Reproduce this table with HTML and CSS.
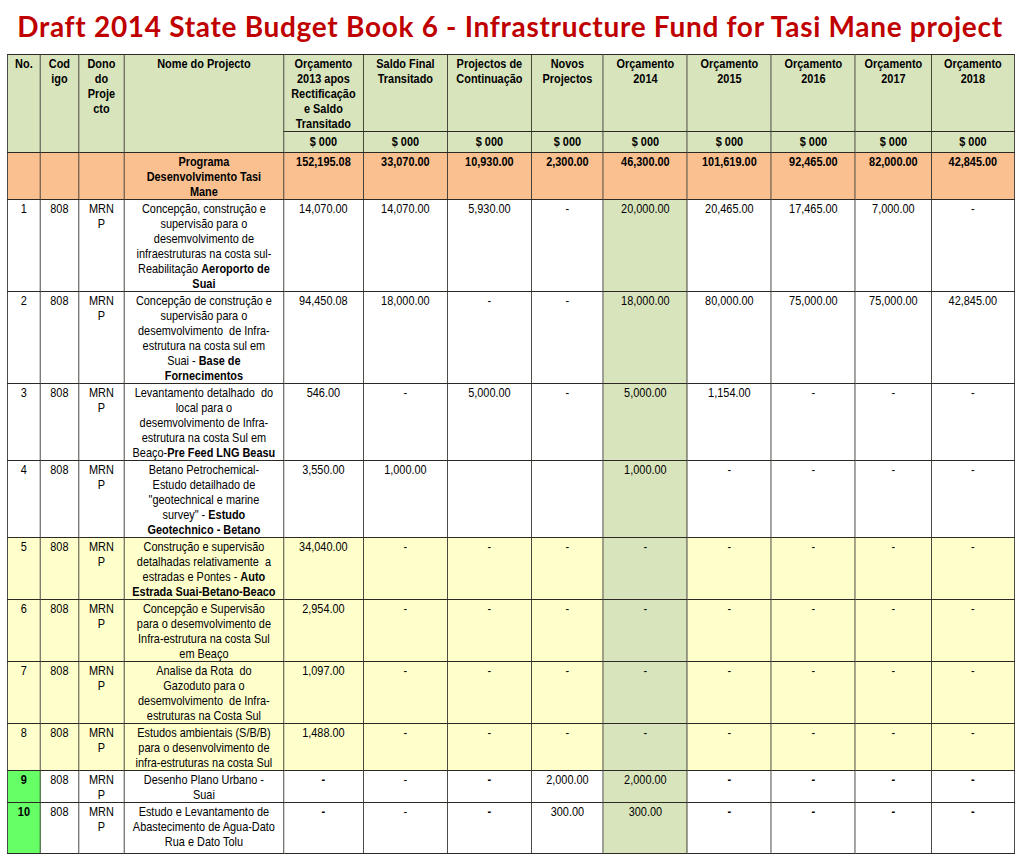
FILE: index.html
```html
<!DOCTYPE html>
<html lang="pt">
<head>
<meta charset="utf-8">
<title>Draft 2014 State Budget Book 6</title>
<link rel="stylesheet" href="styles.css">
</head>
<body>
<h1 class="title">Draft 2014 State Budget Book 6 - Infrastructure Fund for Tasi Mane project</h1>
<div class="wrap">
<table class="budget">
  <colgroup>
    <col class="c-no"><col class="c-cod"><col class="c-dono"><col class="c-nome">
    <col class="c-o13"><col class="c-saldo"><col class="c-cont"><col class="c-novos">
    <col class="c-o14"><col class="c-o15"><col class="c-o16"><col class="c-o17"><col class="c-o18">
  </colgroup>
  <thead>
    <tr class="h1">
      <th rowspan="2">No.</th>
      <th rowspan="2">Cod<br>igo</th>
      <th rowspan="2">Dono<br>do<br>Proje<br>cto</th>
      <th rowspan="2">Nome do Projecto</th>
      <th>Orçamento<br>2013 apos<br>Rectificação<br>e Saldo<br>Transitado</th>
      <th>Saldo Final<br>Transitado</th>
      <th>Projectos de<br>Continuação</th>
      <th>Novos<br>Projectos</th>
      <th>Orçamento<br>2014</th>
      <th>Orçamento<br>2015</th>
      <th>Orçamento<br>2016</th>
      <th>Orçamento<br>2017</th>
      <th>Orçamento<br>2018</th>
    </tr>
    <tr class="h2">
      <th>$ 000</th><th>$ 000</th><th>$ 000</th><th>$ 000</th><th>$ 000</th>
      <th>$ 000</th><th>$ 000</th><th>$ 000</th><th>$ 000</th>
    </tr>
  </thead>
  <tbody>
    <tr class="prog">
      <td></td><td></td><td></td>
      <td>Programa<br>Desenvolvimento Tasi<br>Mane</td>
      <td>152,195.08</td><td>33,070.00</td><td>10,930.00</td><td>2,300.00</td>
      <td>46,300.00</td><td>101,619.00</td><td>92,465.00</td><td>82,000.00</td><td>42,845.00</td>
    </tr>
    <tr>
      <td>1</td><td>808</td><td>MRN<br>P</td>
      <td class="name">Concepção, construção e<br>supervisão para o<br>desemvolvimento de<br>infraestruturas na costa sul-<br>Reabilitação <b>Aeroporto de</b><br><b>Suai</b></td>
      <td>14,070.00</td><td>14,070.00</td><td>5,930.00</td><td>-</td>
      <td class="hl">20,000.00</td><td>20,465.00</td><td>17,465.00</td><td>7,000.00</td><td>-</td>
    </tr>
    <tr>
      <td>2</td><td>808</td><td>MRN<br>P</td>
      <td class="name">Concepção de construção e<br>supervisão para o<br>desemvolvimento&nbsp; de Infra-<br>estrutura na costa sul em<br>Suai - <b>Base de</b><br><b>Fornecimentos</b></td>
      <td>94,450.08</td><td>18,000.00</td><td>-</td><td>-</td>
      <td class="hl">18,000.00</td><td>80,000.00</td><td>75,000.00</td><td>75,000.00</td><td>42,845.00</td>
    </tr>
    <tr>
      <td>3</td><td>808</td><td>MRN<br>P</td>
      <td class="name">Levantamento detalhado&nbsp; do<br>local para o<br>desemvolvimento de Infra-<br>estrutura na costa Sul em<br>Beaço-<b>Pre Feed LNG Beasu</b></td>
      <td>546.00</td><td>-</td><td>5,000.00</td><td>-</td>
      <td class="hl">5,000.00</td><td>1,154.00</td><td>-</td><td>-</td><td>-</td>
    </tr>
    <tr>
      <td>4</td><td>808</td><td>MRN<br>P</td>
      <td class="name">Betano Petrochemical-<br>Estudo detailhado de<br>"geotechnical e marine<br>survey" - <b>Estudo</b><br><b>Geotechnico - Betano</b></td>
      <td>3,550.00</td><td>1,000.00</td><td></td><td></td>
      <td class="hl">1,000.00</td><td>-</td><td>-</td><td>-</td><td>-</td>
    </tr>
    <tr class="yel">
      <td>5</td><td>808</td><td>MRN<br>P</td>
      <td class="name">Construção e supervisão<br>detalhadas relativamente&nbsp; a<br>estradas e Pontes - <b>Auto</b><br><b>Estrada Suai-Betano-Beaco</b></td>
      <td>34,040.00</td><td>-</td><td>-</td><td>-</td>
      <td class="hl">-</td><td>-</td><td>-</td><td>-</td><td>-</td>
    </tr>
    <tr class="yel">
      <td>6</td><td>808</td><td>MRN<br>P</td>
      <td class="name">Concepção e Supervisão<br>para o desemvolvimento de<br>Infra-estrutura na costa Sul<br>em Beaço</td>
      <td>2,954.00</td><td>-</td><td>-</td><td>-</td>
      <td class="hl">-</td><td>-</td><td>-</td><td>-</td><td>-</td>
    </tr>
    <tr class="yel">
      <td>7</td><td>808</td><td>MRN<br>P</td>
      <td class="name">Analise da Rota&nbsp; do<br>Gazoduto para o<br>desemvolvimento&nbsp; de Infra-<br>estruturas na Costa Sul</td>
      <td>1,097.00</td><td>-</td><td>-</td><td>-</td>
      <td class="hl">-</td><td>-</td><td>-</td><td>-</td><td>-</td>
    </tr>
    <tr class="yel">
      <td>8</td><td>808</td><td>MRN<br>P</td>
      <td class="name">Estudos ambientais (S/B/B)<br>para o desenvolvimento de<br>infra-estruturas na costa Sul</td>
      <td>1,488.00</td><td>-</td><td>-</td><td>-</td>
      <td class="hl">-</td><td>-</td><td>-</td><td>-</td><td>-</td>
    </tr>
    <tr class="r9">
      <td class="new">9</td><td>808</td><td>MRN<br>P</td>
      <td class="name">Desenho Plano Urbano -<br>Suai</td>
      <td class="b">-</td><td>-</td><td class="b">-</td><td>2,000.00</td>
      <td class="hl">2,000.00</td><td class="b">-</td><td class="b">-</td><td class="b">-</td><td class="b">-</td>
    </tr>
    <tr class="r10">
      <td class="new">10</td><td>808</td><td>MRN<br>P</td>
      <td class="name">Estudo e Levantamento de<br>Abastecimento de Agua-Dato<br>Rua e Dato Tolu</td>
      <td class="b">-</td><td>-</td><td class="b">-</td><td>300.00</td>
      <td class="hl">300.00</td><td class="b">-</td><td class="b">-</td><td class="b">-</td><td class="b">-</td>
    </tr>
  </tbody>
</table>
</div>
</body>
</html>
```
FILE: styles.css
```css
html, body {
  margin: 0;
  padding: 0;
  background: #ffffff;
}

.title {
  margin: 0;
  padding: 9px 0 0 0;
  height: 46px;
  box-sizing: border-box;
  text-align: center;
  font-family: Lato, "Open Sans", sans-serif;
  font-weight: 700;
  font-size: 28px;
  letter-spacing: 0.7px;
  line-height: 34px;
  color: #c00000;
  white-space: nowrap;
}

/* The table font is a narrow Arial; Liberation Sans is condensed horizontally. */
.wrap {
  --s: 0.84;
  width: 1020px;
  overflow: hidden;
  padding-top: 8px;
}

.budget {
  margin: 0 0 0 7px;
  border-collapse: collapse;
  table-layout: fixed;
  width: calc(1007px / var(--s));
  transform: scaleX(var(--s));
  transform-origin: 0 0;
  font-family: "Liberation Sans", Arial, sans-serif;
  font-size: 13px;
  line-height: 15px;
  color: #000;
}

.c-no { width: calc(33px / var(--s)); }
.c-cod { width: calc(38px / var(--s)); }
.c-dono { width: calc(46px / var(--s)); }
.c-nome { width: calc(159px / var(--s)); }
.c-o13 { width: calc(80px / var(--s)); }
.c-saldo { width: calc(84px / var(--s)); }
.c-cont { width: calc(84px / var(--s)); }
.c-novos { width: calc(72px / var(--s)); }
.c-o14 { width: calc(84px / var(--s)); }
.c-o15 { width: calc(84px / var(--s)); }
.c-o16 { width: calc(84px / var(--s)); }
.c-o17 { width: calc(76px / var(--s)); }
.c-o18 { width: calc(83px / var(--s)); }

.budget th,
.budget td {
  border: 1px solid #2c2925;
  padding: 1px 0 0 0;
  text-align: center;
  vertical-align: top;
  white-space: nowrap;
}

.budget th {
  background: #d8e4bc;
  font-weight: 700;
}

.h1 th { height: 75px; }
.h2 th { height: 18px; padding-top: 2px; }

.prog td {
  background: #fac090;
  font-weight: 700;
}

.budget td.hl { background: #d8e4bc; }

.yel td { background: #ffffcc; }
.yel td.hl { background: #d8e4bc; }

.budget td.new { background: #66ff66; font-weight: 700; }

.budget td.b { font-weight: 700; }

.r10 td { height: 49px; }
```
